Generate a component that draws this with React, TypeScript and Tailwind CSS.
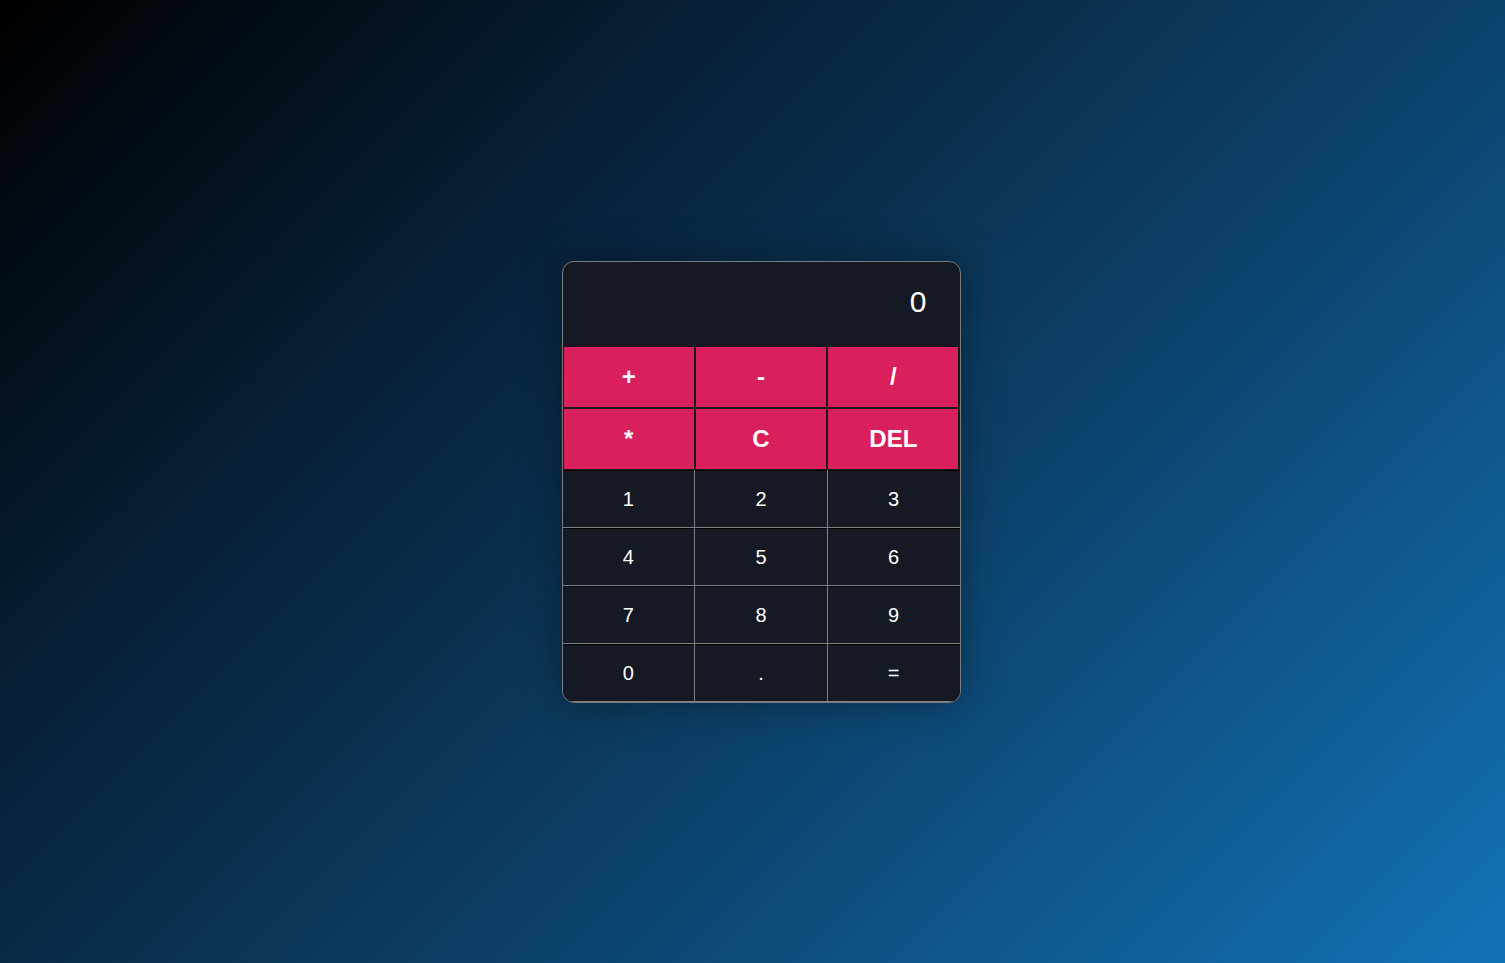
import { useState } from "react";

const ops = ["+", "-", "/", "*", "C", "DEL"];
const nums = ["1", "2", "3", "4", "5", "6", "7", "8", "9", "0", ".", "="];

export default function App() {
  const [value] = useState("0");

  return (
    <div className="min-h-screen w-full flex items-center justify-center bg-[linear-gradient(135deg,#000000_0%,#072038_30%,#0c4169_60%,#1272b6_100%)] font-['Liberation_Sans',Arial,sans-serif]">
      <div className="w-[399px] ml-[17px] rounded-xl border border-[#7c7c7c] bg-[#141923] overflow-hidden shadow-[0_0_40px_rgba(0,0,0,0.35)]">
        <div className="h-[84px] flex items-center justify-end pr-[33px] pb-1 text-white text-[30px]">
          {value}
        </div>

        <div className="grid grid-cols-3">
          {ops.map((op) => (
            <button
              key={op}
              className="h-[62px] bg-[#d91f5c] border border-[#141923] text-white font-bold text-[24px]"
            >
              {op}
            </button>
          ))}
        </div>

        <div className="grid grid-cols-3 gap-x-px bg-[#808080]">
          {nums.map((n) => (
            <button
              key={n}
              className="h-[58px] bg-[#141923] border-t border-t-black border-b border-b-[#808080] text-white text-[20px]"
            >
              {n}
            </button>
          ))}
        </div>
      </div>
    </div>
  );
}
